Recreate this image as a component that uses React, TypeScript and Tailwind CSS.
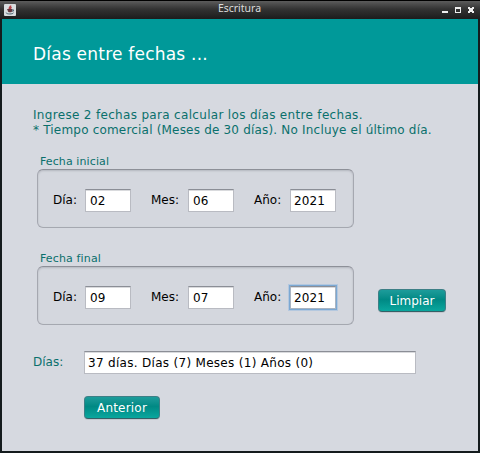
type DateGroupProps = {
  title: string;
  titleClass: string;
  day: string;
  month: string;
  year: string;
  yearFocused?: boolean;
};

const fieldClass =
  "h-[23px] w-[46px] border border-[#b9bbc2] border-t-[#8b8e96] bg-white pl-[4px] leading-[22px] whitespace-nowrap shadow-[inset_0_1px_0_#d9dadd]";
const yearClass =
  "h-[23px] w-[46px] border border-[#b9bbc2] border-t-[#8b8e96] bg-white pl-[3px] leading-[22px] tracking-[0.1px] whitespace-nowrap shadow-[inset_0_1px_0_#d9dadd]";
const focusedClass =
  "h-[23px] w-[46px] border border-[#a9b4c2] border-t-[#8b8e96] bg-white pl-[3px] leading-[22px] tracking-[0.1px] whitespace-nowrap shadow-[0_0_0_1px_#7ba8d3,0_0_0_2px_#b4c8df,inset_0_1px_0_#d9dadd]";
const buttonClass =
  "block h-[23px] rounded-[4px] border border-[#3d7f86] border-b-[#355f66] bg-linear-to-b from-[#1c9c9b] via-[#008984] via-45% to-[#0aa79e] text-center leading-[22px] text-white shadow-[0_1px_0_#c3c6cd]";

function DateGroup({ title, titleClass, day, month, year, yearFocused }: DateGroupProps) {
  return (
    <fieldset className="block">
      <div className={`ml-[3px] h-[15px] text-[11px] leading-[16px] whitespace-nowrap text-[#0a706c] ${titleClass}`}>
        {title}
      </div>
      <div className="flex h-[59px] w-[317px] items-start rounded-[6px] border border-[#a5a8b0] border-t-[#8d9098] bg-[#d4d7de] pt-[19px] pl-[15px] shadow-[inset_0_1px_2px_#b4b7bf]">
        <span className="w-[32px] leading-[23px]">Día:</span>
        <div className={fieldClass}>{day}</div>
        <span className="ml-[20px] w-[37px] leading-[23px]">Mes:</span>
        <div className={fieldClass}>{month}</div>
        <span className="ml-[20px] w-[36px] leading-[23px]">Año:</span>
        <div className={yearFocused ? focusedClass : yearClass}>{year}</div>
      </div>
    </fieldset>
  );
}

function TitleBar() {
  return (
    <header className="flex h-[19px] items-center border-t border-black bg-linear-to-b from-[#5c5c5c] via-[#333] via-45% to-[#1c1c1c] px-[4px] text-[#dcdcdc]">
      <svg width="12" height="12" viewBox="0 0 12 12" className="-mt-[1px]">
        <rect width="12" height="12" rx="1" fill="#d9dddf" />
        <path d="M6.5 1.5C7 3 4.3 3.3 5.5 5.3M7.5 3C6.3 3.7 6.2 4 6.7 5" fill="none" stroke="#b54348" strokeWidth="1.5" />
        <path d="M3 5h5.2v1.7c0 2.2-4.4 2.2-4.4 0z" fill="#61353d" />
        <path d="M8.2 5.8h1.2v1.3H8M2.2 8.7c0 1.7 7.2 1.7 7.2 0" fill="none" stroke="#49616f" />
      </svg>
      <h1 className="grow pb-[4px] pl-[21px] text-center font-['Noto_Sans','DejaVu_Sans',sans-serif] text-[10.5px] leading-[14px]">
        Escritura
      </h1>
      <svg width="34" height="8" viewBox="0 0 34 8" className="mb-[2px]" shapeRendering="crispEdges">
        <path d="M0 6h6v2H0z" fill="#eee" />
        <path d="M13 2h6v6h-6zM14 4v3h4V4z" fill="#eee" fillRule="evenodd" />
        <path d="M26 2h2v1h2V2h2v2h-1v2h1v2h-2V7h-2v1h-2V6h1V4h-1z" fill="#eee" />
      </svg>
    </header>
  );
}

export default function App() {
  return (
    <div className="h-[453px] w-[480px] overflow-hidden bg-[#141b1d] font-['DejaVu_Sans',sans-serif] text-[12px] text-black">
      <TitleBar />
      <main className="mx-[2px] h-[432px] w-[476px] bg-[#d6d9e0]">
        <div className="h-[65px] bg-[#009999] pt-[23px] pl-[31px]">
          <h2 className="text-[17px] leading-[24px] tracking-[0.22px] whitespace-nowrap text-white">Días entre fechas ...</h2>
        </div>
        <div className="pt-[24px] pl-[31px]">
          <div className="text-[12px] leading-[15px] whitespace-nowrap text-[#0a706c]">
            <p className="tracking-[0.32px]">Ingrese 2 fechas para calcular los días entre fechas.</p>
            <p className="tracking-[0.19px]">* Tiempo comercial (Meses de 30 días). No Incluye el último día.</p>
          </div>
          <div className="mt-[16px] ml-[4px]">
            <DateGroup title="Fecha inicial" titleClass="tracking-[0.1px]" day="02" month="06" year="2021" />
          </div>
          <div className="mt-[23px] ml-[4px] flex items-end">
            <DateGroup title="Fecha final" titleClass="tracking-[0.14px]" day="09" month="07" year="2021" yearFocused />
            <button className={`${buttonClass} mb-[13px] ml-[24px] w-[68px]`}>Limpiar</button>
          </div>
          <div className="mt-[26px] flex">
            <span className="w-[51px] leading-[23px] text-[#0a706c]">Días:</span>
            <div className="h-[23px] w-[332px] border border-[#b9bbc2] border-t-[#8b8e96] bg-white pl-[3px] leading-[22px] tracking-[0.3px] whitespace-nowrap shadow-[inset_0_1px_0_#d9dadd]">
              37 días. Días (7) Meses (1) Años (0)
            </div>
          </div>
          <button className={`${buttonClass} mt-[22px] ml-[51px] w-[76px] tracking-[0.2px]`}>Anterior</button>
        </div>
      </main>
    </div>
  );
}
